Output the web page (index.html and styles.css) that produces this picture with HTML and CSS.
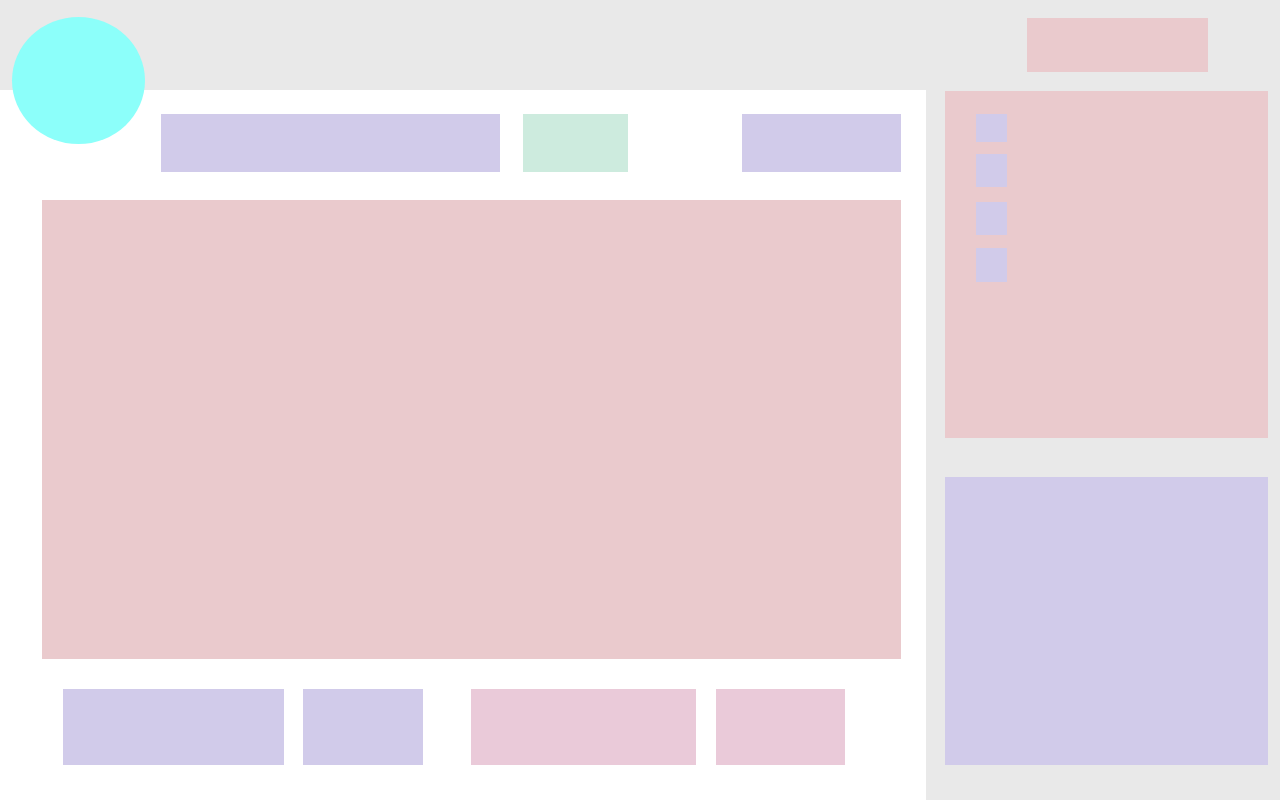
FILE: index.html
```html
<!DOCTYPE html>
<html lang="en">
<head>
    <meta charset="UTF-8">
    <meta name="viewport" content="width=device-width, initial-scale=1.0">
    <title>Layout</title>
    <link rel="stylesheet" href="styles.css">
</head>
<body>
    <div class="page">
        <header class="header">
            <div class="logo"></div>
            <div class="header-action"></div>
        </header>

        <div class="layout">
            <main class="main">
                <nav class="nav">
                    <div class="nav-search"></div>
                    <div class="nav-tag"></div>
                    <div class="nav-button"></div>
                </nav>

                <div class="content"></div>

                <div class="footer-row">
                    <div class="footer-item wide"></div>
                    <div class="footer-item small"></div>
                    <div class="footer-item pink wide-pink"></div>
                    <div class="footer-item pink small-pink"></div>
                </div>
            </main>

            <aside class="sidebar">
                <div class="side-panel">
                    <div class="side-icon first"></div>
                    <div class="side-icon second"></div>
                    <div class="side-icon third"></div>
                    <div class="side-icon fourth"></div>
                </div>
                <div class="side-card"></div>
            </aside>
        </div>
    </div>
</body>
</html>
```

FILE: styles.css
```css
body {
    margin: 0;
    background-color: #e9e9e9;
}

.page {
    position: relative;
    width: 1280px;
    height: 800px;
    overflow: hidden;
}

.header {
    height: 90px;
    background-color: #e9e9e9;
    display: flex;
    justify-content: flex-end;
    align-items: flex-start;
    padding: 18px 72px 0 0;
    box-sizing: border-box;
}

.logo {
    position: absolute;
    left: 12px;
    top: 17px;
    width: 133px;
    height: 127px;
    border-radius: 50%;
    background-color: #8cfffa;
    z-index: 2;
}

.header-action {
    width: 181px;
    height: 54px;
    background-color: #eacacd;
}

.layout {
    display: flex;
    height: 710px;
}

.main {
    width: 926px;
    background-color: #ffffff;
}

.nav {
    display: flex;
    height: 58px;
    margin-top: 24px;
    padding: 0 25px 0 161px;
}

.nav-search {
    width: 339px;
    background-color: #d1cbea;
}

.nav-tag {
    width: 105px;
    margin-left: 23px;
    background-color: #cdebde;
}

.nav-button {
    width: 159px;
    margin-left: auto;
    background-color: #d1cbea;
}

.content {
    margin: 28px 25px 0 42px;
    height: 459px;
    background-color: #eacacd;
}

.footer-row {
    display: flex;
    margin-top: 30px;
    padding-left: 63px;
    height: 76px;
}

.footer-item {
    background-color: #d1cbea;
}

.footer-item.pink {
    background-color: #eacad9;
}

.wide {
    width: 221px;
}

.small {
    width: 120px;
    margin-left: 19px;
}

.wide-pink {
    width: 225px;
    margin-left: 48px;
}

.small-pink {
    width: 129px;
    margin-left: 20px;
}

.sidebar {
    width: 354px;
    padding: 1px 12px 0 19px;
    box-sizing: border-box;
}

.side-panel {
    height: 347px;
    background-color: #eacacd;
    padding: 23px 0 0 31px;
    box-sizing: border-box;
}

.side-icon {
    width: 31px;
    height: 33px;
    background-color: #d1cbea;
}

.side-icon.first {
    height: 28px;
}

.side-icon.second {
    margin-top: 12px;
}

.side-icon.third {
    margin-top: 15px;
}

.side-icon.fourth {
    margin-top: 13px;
    height: 34px;
}

.side-card {
    margin-top: 39px;
    height: 288px;
    background-color: #d1cbea;
}
```
